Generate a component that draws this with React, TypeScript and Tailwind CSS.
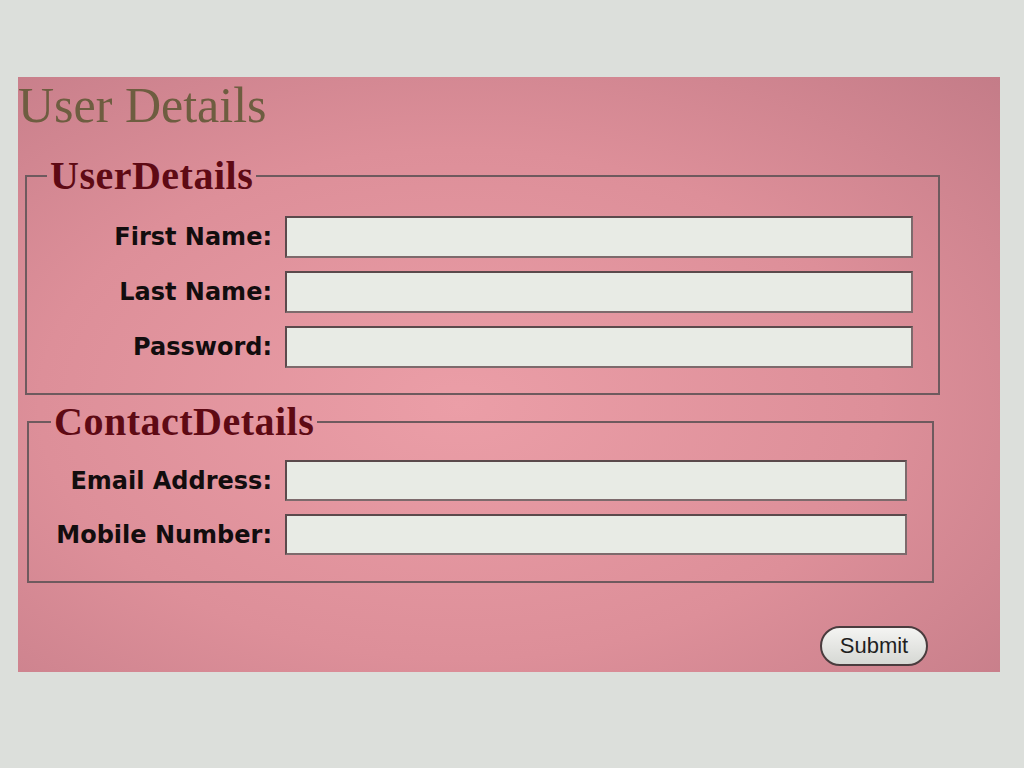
import React from "react";

const labelCls =
  "shrink-0 text-right text-[24px] leading-[28px] font-bold text-[#120d0e] [font-family:'DejaVu_Sans',Verdana,sans-serif] whitespace-nowrap";
const inputCls =
  "min-w-0 flex-1 bg-[#e8ebe5] border-2 border-t-[#5b4a4c] border-l-[#5b4a4c] border-b-[#7d6a6c] border-r-[#7d6a6c] outline-none";

function Row({ label, h }: { label: string; h: string }) {
  return (
    <div className="flex items-center gap-[13px]">
      <div className={"w-[245px] " + labelCls}>{label}</div>
      <input className={inputCls + " " + h} type="text" />
    </div>
  );
}

export default function App() {
  return (
    <div className="w-[1024px] h-[768px] bg-[#dcdfdb] pt-[77px] pl-[18px] overflow-hidden">
      <div className="w-[982px] h-[595px] bg-[radial-gradient(ellipse_at_45%_55%,#eb9ea7_0%,#dd8f99_55%,#c47c88_100%)] flex flex-col">
        <h1 className="text-[50px] leading-[56px] text-[#6e5d40] [font-family:'Liberation_Serif','Times_New_Roman',serif]">
          User Details
        </h1>
        <fieldset className="ml-[7px] w-[915px] mt-[19px] border-2 border-[#6e5a5e] pb-[25px] pr-[25px]">
          <legend className="ml-[20px] px-[3px] text-[40px] leading-[48px] font-bold tracking-[0.5px] text-[#5e0a14] [font-family:'Liberation_Serif','Times_New_Roman',serif]">
            UserDetails
          </legend>
          <div className="flex flex-col gap-[13px] mt-[16px]">
            <Row label="First Name:" h="h-[42px]" />
            <Row label="Last Name:" h="h-[42px]" />
            <Row label="Password:" h="h-[42px]" />
          </div>
        </fieldset>
        <fieldset className="ml-[9px] w-[907px] mt-[3px] border-2 border-[#6e5a5e] pb-[26px] pr-[25px]">
          <legend className="ml-[22px] px-[3px] text-[40px] leading-[48px] font-bold tracking-[0.5px] text-[#5e0a14] [font-family:'Liberation_Serif','Times_New_Roman',serif]">
            ContactDetails
          </legend>
          <div className="flex flex-col gap-[13px] mt-[14px] -ml-[2px]">
            <Row label="Email Address:" h="h-[41px]" />
            <Row label="Mobile Number:" h="h-[41px]" />
          </div>
        </fieldset>
        <div className="flex justify-end pr-[72px] mt-[43px]">
          <button className="w-[108px] h-[40px] rounded-full border-2 border-[#4a3c3e] bg-[linear-gradient(#f4f4f2,#d6d8d4)] text-[22px] leading-none text-[#1f1f1f] [font-family:'Liberation_Sans',Arial,sans-serif]">
            Submit
          </button>
        </div>
      </div>
    </div>
  );
}
